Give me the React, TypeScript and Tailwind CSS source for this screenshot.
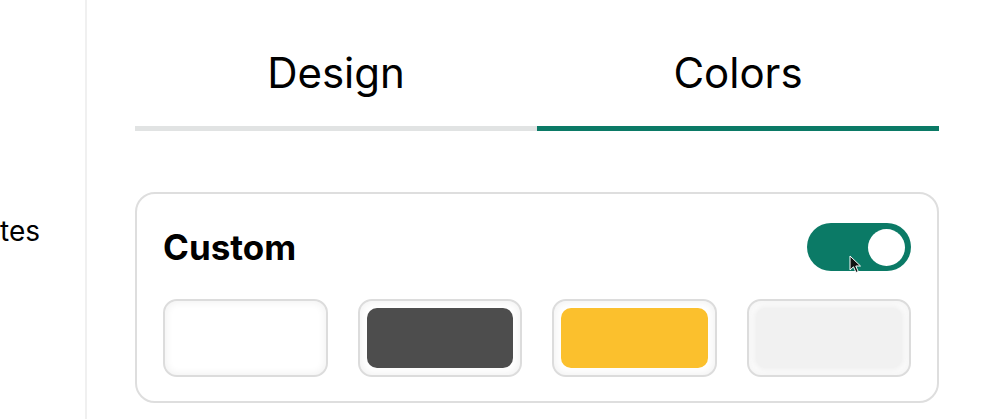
import React, { useState } from "react";

const swatches = [
  { name: "white", inner: "bg-white" },
  { name: "dark", inner: "bg-[#4d4d4d]" },
  { name: "yellow", inner: "bg-[#fbc02d]" },
  { name: "light", inner: "bg-[#f1f1f1] shadow-[0_0_5px_3px_#f1f1f1]" },
];

const Cursor = () => (
  <svg
    className="absolute left-[42px] top-[32px] pointer-events-none"
    width="14"
    height="20"
    viewBox="0 0 14 20"
  >
    <path
      d="M1 1 L1 15 L4.5 11.8 L7 17.5 L9.2 16.5 L6.8 11 L11.5 11 Z"
      fill="#111"
      stroke="#fff"
      strokeWidth="1"
      strokeLinejoin="round"
    />
  </svg>
);

export default function App() {
  const [tab, setTab] = useState("colors");
  const [custom, setCustom] = useState(true);

  return (
    <div className="flex h-[419px] w-[985px] overflow-hidden bg-white font-['Inter',sans-serif] text-black">
      <div className="w-[85px] shrink-0 border-r-2 border-[#f0f0f0] box-content pt-[217px]">
        <span className="block text-[28px] leading-none whitespace-nowrap">tes</span>
      </div>

      <div className="flex-1 pl-[48px] pr-[46px] pt-[52px]">
        <div className="grid grid-cols-2">
          <button
            onClick={() => setTab("design")}
            className={`pb-[32px] text-[42px] leading-none border-b-[5px] ${
              tab === "design" ? "border-[#0b7a66]" : "border-[#e1e3e3]"
            }`}
          >
            Design
          </button>
          <button
            onClick={() => setTab("colors")}
            className={`pb-[32px] text-[42px] leading-none border-b-[5px] ${
              tab === "colors" ? "border-[#0b7a66]" : "border-[#e1e3e3]"
            }`}
          >
            Colors
          </button>
        </div>

        <div className="mt-[61px] rounded-[20px] border-2 border-[#dedede] px-[26px] pt-[29px] pb-[24px]">
          <div className="flex h-[48px] items-center justify-between">
            <span className="text-[35px] font-bold leading-none">Custom</span>
            <div className="relative">
              <button
                onClick={() => setCustom(!custom)}
                className={`flex h-[48px] w-[104px] items-center rounded-full px-[6px] ${
                  custom ? "justify-end bg-[#0b7a66]" : "justify-start bg-[#d5d5d5]"
                }`}
              >
                <span className="h-[37px] w-[37px] rounded-full bg-white" />
              </button>
              <Cursor />
            </div>
          </div>

          <div className="mt-[28px] grid grid-cols-4 gap-[30px]">
            {swatches.map((s) => (
              <button
                key={s.name}
                className="h-[78px] overflow-hidden rounded-[14px] border-2 border-[#dcdcdc] bg-white p-[7px] shadow-[inset_0_0_7px_2px_rgba(0,0,0,0.05)]"
              >
                <div className={`h-full w-full rounded-[10px] ${s.inner}`} />
              </button>
            ))}
          </div>
        </div>
      </div>
    </div>
  );
}
